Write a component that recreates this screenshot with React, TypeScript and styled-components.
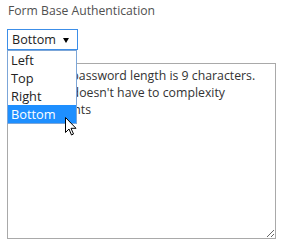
import React from "react";
import styled, { createGlobalStyle } from "styled-components";

const Global = createGlobalStyle`
  html, body { margin: 0; padding: 0; background: #fff; }
  body { font-family: "Open Sans", "Noto Sans", sans-serif; }
`;

const Page = styled.div`
  display: flex;
  flex-direction: column;
  align-items: flex-start;
  padding: 2px 12px 0 7px;
  width: 288px;
  box-sizing: border-box;
`;

const Title = styled.div`
  font-size: 12.2px;
  line-height: 17px;
  color: #505050;
  padding-left: 1px;
`;

const SelectWrap = styled.div`
  position: relative;
  margin-top: 10px;
`;

const SelectBox = styled.div`
  display: flex;
  align-items: center;
  justify-content: space-between;
  width: 71px;
  height: 21px;
  box-sizing: border-box;
  border: 1px solid #3c8ee8;
  padding: 0 8px 0 4px;
  font-size: 12.6px;
  color: #222;
  background: #fff;
`;

const Caret = styled.span`
  width: 0;
  height: 0;
  border-left: 3px solid transparent;
  border-right: 3px solid transparent;
  border-top: 5px solid #000;
  margin-top: 1px;
`;

const List = styled.ul`
  position: absolute;
  top: 21px;
  left: 0;
  width: 70px;
  margin: 0;
  padding: 0;
  list-style: none;
  border: 1px solid #7ca6d8;
  background: #fff;
  z-index: 2;
  box-sizing: border-box;
`;

const Item = styled.li<{ $active?: boolean }>`
  height: 18px;
  line-height: 18px;
  padding-left: 3px;
  font-size: 12.8px;
  color: ${(p) => (p.$active ? "#fff" : "#222")};
  background: ${(p) => (p.$active ? "#1e8fff" : "transparent")};
`;

const Area = styled.textarea`
  margin-top: 13px;
  width: 269px;
  height: 176px;
  box-sizing: border-box;
  border: 1px solid #a9a9a9;
  padding: 3px 2px 3px 5px;
  font-family: "Open Sans", "Noto Sans", sans-serif;
  font-size: 12.3px;
  line-height: 17px;
  color: #333;
  resize: both;
  outline: none;
`;

const Pointer = styled.svg`
  position: absolute;
  left: 58px;
  top: 88px;
  z-index: 3;
`;

export default function App() {
  const options = ["Left", "Top", "Right", "Bottom"];
  return (
    <>
      <Global />
      <Page>
        <Title>Form Base Authentication</Title>
        <SelectWrap>
          <SelectBox>
            <span>Bottom</span>
            <Caret />
          </SelectBox>
          <List>
            {options.map((o) => (
              <Item key={o} $active={o === "Bottom"}>
                {o}
              </Item>
            ))}
          </List>
          <Pointer width="13" height="19" viewBox="0 0 13 19">
            <path
              d="M0.5 0.5 L0.5 15.5 L4 12 L6.5 18 L8.5 17 L6 11.3 L11 11.3 Z"
              fill="#fff"
              stroke="#000"
              strokeWidth="1"
              strokeLinejoin="miter"
            />
          </Pointer>
        </SelectWrap>
        <Area
          readOnly
          value={
            "Minimum password length is 9 characters. Password doesn't have to complexity requirements"
          }
        />
      </Page>
    </>
  );
}
